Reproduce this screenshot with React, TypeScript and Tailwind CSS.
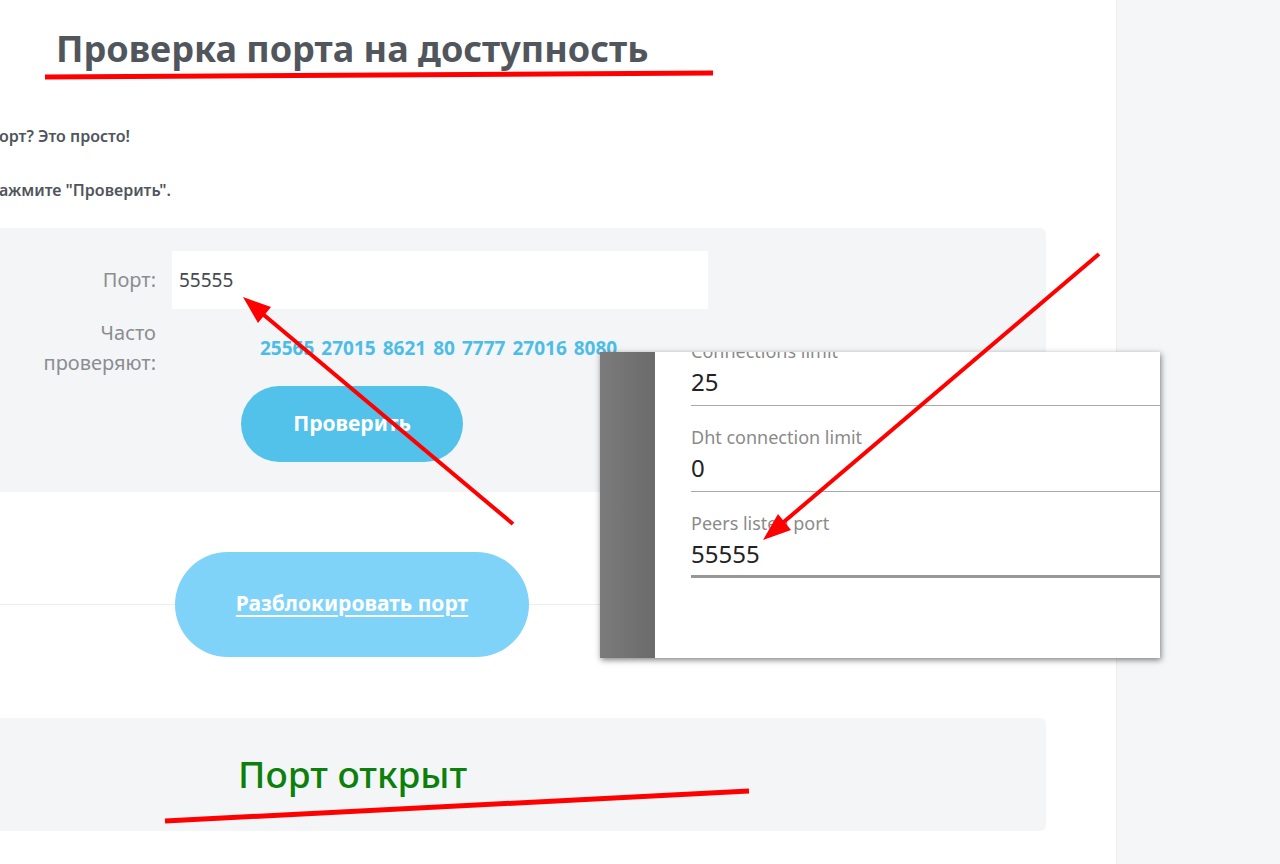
import React from 'react';

const ports = ['25565', '27015', '8621', '80', '7777', '27016', '8080'];

// поле из вставленного скриншота настроек клиента
const SettingField = ({ label, value, last }: { label: string; value: string; last?: boolean }) => (
    <div className={`h-[86px] flex flex-col ${last ? 'border-b-[3px] border-[#979797]' : 'border-b border-[#a9a9a9]'}`}>
        <div className="pt-[20px] text-[18px] leading-[22px] text-[#8a8a8a]">{label}</div>
        <div className="mt-[5px] text-[24px] leading-[30px] text-[#222]">{value}</div>
    </div>
);

export default function App() {
    return (
        <div className="relative w-[1280px] h-[864px] overflow-hidden bg-white flex font-['Noto_Sans',sans-serif]">
            <main className="w-[1116px] shrink-0 flex flex-col">
                <h1 className="ml-[56px] mt-[26px] text-[36px] leading-[46px] font-bold text-[#51565d] whitespace-nowrap">
                    Проверка порта на доступность
                </h1>

                <div className="mt-[53px] w-[130px] flex justify-end">
                    <span className="whitespace-nowrap text-[16px] leading-[22px] font-semibold text-[#50555c]">
                        Как проверить открыт ли порт? Это просто!
                    </span>
                </div>
                <div className="mt-[32px] w-[171px] flex justify-end">
                    <span className="whitespace-nowrap text-[16px] leading-[22px] font-semibold text-[#50555c]">
                        Введите номер порта и нажмите "Проверить".
                    </span>
                </div>

                {/* Форма проверки */}
                <section className="mt-[27px] w-[1046px] h-[264px] bg-[#f3f5f7] rounded-r-md pt-[23px]">
                    <div className="flex items-center">
                        <label className="w-[156px] text-right text-[20px] text-[#8b8d90]">Порт:</label>
                        <div className="ml-[16px] w-[536px] h-[58px] bg-white flex items-center px-[7px] text-[19px] text-[#45494e]">
                            55555
                        </div>
                    </div>
                    <div className="mt-[9px] flex items-center">
                        <div className="w-[156px] text-right text-[20px] leading-[30px] text-[#8b8d90]">
                            Часто<br />проверяют:
                        </div>
                        <div className="ml-[104px] flex gap-[7px] text-[19px] font-bold text-[#4dbde8]">
                            {ports.map((p) => (
                                <span key={p}>{p}</span>
                            ))}
                        </div>
                    </div>
                    <button className="mt-[8px] ml-[241px] w-[222px] h-[76px] rounded-full bg-[#52c2ea] text-white text-[21px] font-bold">
                        Проверить
                    </button>
                </section>

                {/* Разблокировка */}
                <div className="relative h-[226px] flex items-center">
                    <div className="absolute left-0 right-[70px] top-[112px] border-t border-[#ededed]" />
                    <button className="relative ml-[175px] mt-[-2px] w-[354px] h-[105px] rounded-full bg-[#80d3f8] text-white text-[21px] font-bold underline underline-offset-[4px]">
                        Разблокировать порт
                    </button>
                </div>

                {/* Результат */}
                <section className="w-[1046px] h-[113px] bg-[#f3f5f7] rounded-r-md flex items-center pl-[238px]">
                    <span className="text-[37px] font-medium text-[#0b800b] mt-[-2px]">Порт открыт</span>
                </section>
            </main>

            <aside className="flex-1 bg-[#f5f6f8] border-l border-[#eceef1]" />

            {/* Вставленный скриншот настроек */}
            <div className="absolute left-[600px] top-[352px] w-[560px] h-[306px] flex overflow-hidden bg-white shadow-[1px_2px_6px_rgba(0,0,0,0.5)]">
                <div className="w-[55px] bg-gradient-to-r from-[#7b7b7b] to-[#6b6b6b]" />
                <div className="flex-1 pl-[36px] mt-[-32px]">
                    <SettingField label="Connections limit" value="25" />
                    <SettingField label="Dht connection limit" value="0" />
                    <SettingField label="Peers listen port" value="55555" last />
                </div>
            </div>

            {/* Красные пометки */}
            <svg className="absolute inset-0 pointer-events-none" width="1280" height="864">
                <line x1="45" y1="77" x2="713" y2="73" stroke="#f00" strokeWidth="5" />
                <line x1="513" y1="524" x2="258" y2="310" stroke="#f00" strokeWidth="4" />
                <polygon points="243,297 271,307 258,323" fill="#f00" />
                <line x1="1099" y1="254" x2="779" y2="526" stroke="#f00" strokeWidth="4" />
                <polygon points="763,540 791,530 778,514" fill="#f00" />
                <line x1="165" y1="821" x2="749" y2="791" stroke="#f00" strokeWidth="5" />
            </svg>
        </div>
    );
}
